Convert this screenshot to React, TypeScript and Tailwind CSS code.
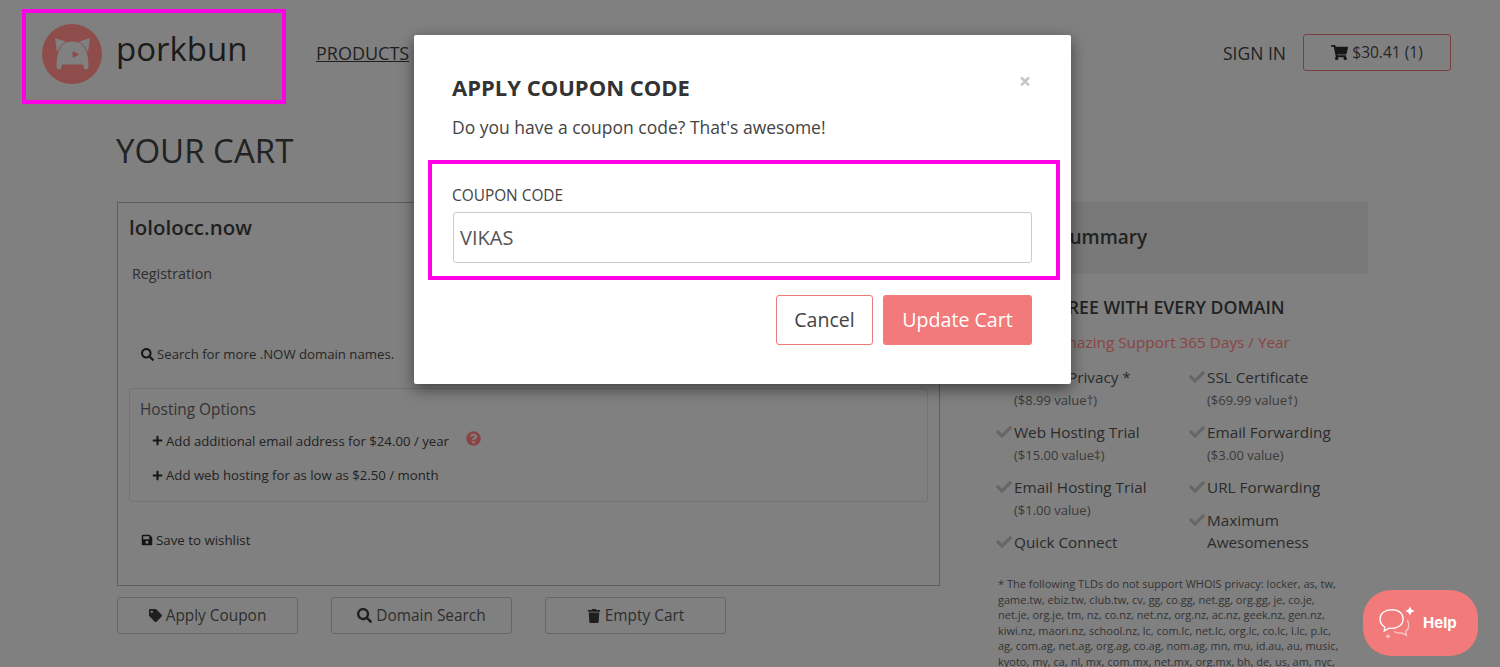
import React from "react";
import { FaCheck, FaChevronDown, FaPlus, FaQuestionCircle, FaSave, FaSearch, FaShoppingCart, FaTag, FaTrash } from "react-icons/fa";

const tldNote =
  "* The following TLDs do not support WHOIS privacy: locker, as, tw, game.tw, ebiz.tw, club.tw, cv, gg, co.gg, net.gg, org.gg, je, co.je, net.je, org.je, tm, nz, co.nz, net.nz, org.nz, ac.nz, geek.nz, gen.nz, kiwi.nz, maori.nz, school.nz, lc, com.lc, net.lc, org.lc, co.lc, l.lc, p.lc, ag, com.ag, net.ag, org.ag, co.ag, nom.ag, mn, mu, id.au, au, music, kyoto, my, ca, nl, mx, com.mx, net.mx, org.mx, bh, de, us, am, nyc,";

const PorkbunLogo = () => (
  <svg viewBox="0 0 60 60" className="w-[60px] h-[60px] shrink-0">
    <circle cx="30" cy="30" r="30" fill="#8e4c4a" />
    {/* ears sit behind the head, the stroke keeps them apart */}
    <path d="M13 14 L25 18 L15 28 Z" fill="#808080" />
    <path d="M48 14 L36 18 L46 28 Z" fill="#808080" />
    <path
      d="M14 43 C14 25 20 17 30.5 17 C41 17 47 25 47 43 C47 47 41 47 41 43 L41 41 L20 41 L20 43 C20 47 14 47 14 43 Z"
      fill="#808080"
      stroke="#8e4c4a"
      strokeWidth="1"
    />
    <path d="M31 27.5 L36.5 30.5 L31 33.5 Z" fill="#8e4c4a" stroke="#8e4c4a" strokeWidth="0.8" />
  </svg>
);

const HelpIcon = () => (
  <svg viewBox="0 0 40 36" className="w-[38px] h-[34px] shrink-0" fill="none" stroke="#ffffff" strokeWidth="1.4">
    <path d="M14.5 4 C7 4 2 8 2 13.5 C2 17.5 4 20.5 7 22 L6.5 26.5 L11.5 23.5 C19 24.5 26.5 21 26.5 13.5 C26.5 8 22 4 14.5 4 Z" />
    <path d="M31 15 C33.5 20 32.5 25 29 27 L30 31 L25 28.5 C22 29 19.5 28.5 17 27" strokeOpacity="0.6" />
    <path d="M33.7 0.5 L35.3 3.7 L38.7 5.3 L35.3 6.9 L33.7 10.1 L32.1 6.9 L28.7 5.3 L32.1 3.7 Z" fill="#ffffff" stroke="none" />
    <path d="M10.5 29 L11.3 31 L13.5 32 L11.3 33 L10.5 35 L9.7 33 L7.5 32 L9.7 31 Z" fill="#ffffff" stroke="none" fillOpacity="0.6" />
  </svg>
);

const Feature = ({ title, sub }: { title: string; sub?: string }) => (
  <div className={`flex gap-[2px] ${sub ? "h-[55px]" : "h-[33px]"}`}>
    <FaCheck className="text-[#666666] text-[16px] mt-[3px] shrink-0" />
    <div>
      <div className="text-[15.3px] leading-[22px] text-[#2b2b2b]">{title}</div>
      {sub && <div className="text-[13px] leading-[22px] text-[#3a3a3a] mt-px">{sub}</div>}
    </div>
  </div>
);

const GhostButton = ({ icon, label }: { icon: React.ReactNode; label: string }) => (
  <div className="w-[181px] h-[37px] flex items-center justify-center gap-[4px] border border-[#666666] rounded-[3px] text-[15.4px] text-[#2e2e2e]">
    {icon}
    {label}
  </div>
);

export default function App() {
  return (
    <div className="relative h-[667px] overflow-hidden bg-[#808080] text-[#222222] font-['Open_Sans',sans-serif]">
      <header className="flex items-start pl-[22px] pr-[49px] pt-[9px]">
        <div className="w-[264px] h-[95px] border-4 border-[#ff00e6] flex items-center gap-[14px] pl-[16px] pb-[5px]">
          <PorkbunLogo />
          <span className="text-[33px] leading-[44px] text-[#1b1b1b] pb-[10px]">porkbun</span>
        </div>
        <a className="ml-[30px] mt-[32px] flex items-center gap-[4px] text-[18px] leading-[24px] underline text-[#1f1f1f]">
          PRODUCTS
          <FaChevronDown className="text-[#8a4442] text-[10px]" />
        </a>
        <div className="ml-auto flex items-center gap-[17px] mt-[25px]">
          <span className="text-[17.5px] leading-[24px] text-[#1f1f1f] mt-[1px]">SIGN IN</span>
          <div className="w-[148px] h-[37px] flex items-center justify-center gap-[4px] border border-[#7c3f3f] rounded-[3px] text-[15.5px] text-[#262626]">
            <FaShoppingCart className="text-[#161616] text-[17px]" />
            $30.41 (1)
          </div>
        </div>
      </header>

      <main className="pl-[116px] pr-[132px]">
        <h1 className="text-[33px] leading-[44px] text-[#222222] mt-[25px]">YOUR CART</h1>
        <div className="flex gap-[35px] mt-[29px]">
          <div className="w-[824px] shrink-0">
            <section className="h-[384px] ml-px border border-[#5e5e5e] px-[11px] pt-[10px]">
              <h2 className="text-[20.5px] leading-[28px] font-semibold text-[#1f1f1f]">lololocc.now</h2>
              <div className="text-[14.3px] leading-[20px] text-[#2e2e2e] ml-[3px] mt-[23px]">Registration</div>
              <div className="flex items-center gap-[3px] text-[13.2px] leading-[18px] text-[#262626] ml-[12px] mt-[61px]">
                <FaSearch className="text-[#161616] text-[13px]" />
                Search for more .NOW domain names.
              </div>
              <div className="h-[114px] border border-[#737373] rounded-[3px] mt-[25px] px-[10px] pt-[10px]">
                <div className="text-[15.4px] leading-[22px] text-[#333333]">Hosting Options</div>
                <div className="flex items-center gap-[3px] text-[13.2px] leading-[18px] text-[#222222] ml-[12px] mt-[10px]">
                  <FaPlus className="text-[#161616] text-[11px]" />
                  Add additional email address for $24.00 / year
                  <FaQuestionCircle className="text-[#8a4442] text-[15px] ml-[14px] mb-[4px]" />
                </div>
                <div className="flex items-center gap-[3px] text-[13.2px] leading-[18px] text-[#222222] ml-[12px] mt-[16px]">
                  <FaPlus className="text-[#161616] text-[11px]" />
                  Add web hosting for as low as $2.50 / month
                </div>
              </div>
              <div className="flex items-center gap-[3px] text-[13.3px] leading-[18px] text-[#1f1f1f] ml-[12px] mt-[29px]">
                <FaSave className="text-[#161616] text-[12px]" />
                Save to wishlist
              </div>
            </section>
            <div className="flex gap-[33px] ml-px mt-[11px]">
              <GhostButton icon={<FaTag className="text-[#1f1f1f] text-[13px]" />} label="Apply Coupon" />
              <GhostButton icon={<FaSearch className="text-[#1f1f1f] text-[15px]" />} label="Domain Search" />
              <GhostButton icon={<FaTrash className="text-[#1f1f1f] text-[14px]" />} label="Empty Cart" />
            </div>
          </div>

          <aside className="w-[393px] shrink-0">
            <div className="h-[72px] flex items-center bg-[#797979] pl-[25px] pb-px text-[19px] font-semibold text-[#222222]">
              Order Summary
            </div>
            <h3 className="text-[17.7px] leading-[24px] font-semibold text-center text-[#222222] mt-[21px]">
              FREE WITH EVERY DOMAIN
            </h3>
            <p className="text-[15.3px] leading-[22px] text-center text-[#8a4442] mt-[12px]">Amazing Support 365 Days / Year</p>
            <div className="flex mt-[13px] pl-[21px]">
              <div className="w-[193px]">
                <Feature title="WHOIS Privacy *" sub="($8.99 value†)" />
                <Feature title="Web Hosting Trial" sub="($15.00 value‡)" />
                <Feature title="Email Hosting Trial" sub="($1.00 value)" />
                <Feature title="Quick Connect" />
              </div>
              <div className="w-[160px]">
                <Feature title="SSL Certificate" sub="($69.99 value†)" />
                <Feature title="Email Forwarding" sub="($3.00 value)" />
                <Feature title="URL Forwarding" />
                <Feature title="Maximum Awesomeness" />
              </div>
            </div>
            <p className="w-[345px] ml-[23px] mt-[12px] text-[11px] leading-[15.5px] text-[#333333]">{tldNote}</p>
          </aside>
        </div>
      </main>

      <div className="absolute left-[414px] top-[35px] w-[657px] h-[349px] bg-white rounded-[2px] shadow-[0_5px_15px_rgba(0,0,0,0.5)] pl-[38px] pr-[39px] pt-[37px]">
        <div className="flex justify-between">
          <h2 className="text-[22px] leading-[30px] font-bold text-[#333333]">APPLY COUPON CODE</h2>
          <span className="text-[21px] leading-[21px] font-bold text-[#c4c4c4] -mt-[1px] mr-[1px]">×</span>
        </div>
        <p className="text-[17.5px] leading-[24px] text-[#444444] mt-[13px]">Do you have a coupon code? That's awesome!</p>
        <div className="w-[632px] h-[120px] -ml-[24px] mt-[21px] border-4 border-[#ff00e6] pl-[21px] pr-[24px] pt-[22px]">
          <div className="text-[15.4px] leading-[20px] text-[#444444] -ml-px">COUPON CODE</div>
          <div className="w-[579px] h-[51px] mt-[6px] flex items-center border border-[#cccccc] rounded-[3px] pl-[6px] text-[20px] text-[#555555]">VIKAS</div>
        </div>
        <div className="flex justify-end gap-[10px] mt-[15px]">
          <div className="w-[97px] h-[50px] flex items-center justify-center border border-[#ef7a7a] rounded-[3px] text-[19.6px] text-[#444444]">Cancel</div>
          <div className="w-[149px] h-[50px] flex items-center justify-center bg-[#f27a7a] rounded-[3px] text-[19.6px] text-white">Update Cart</div>
        </div>
      </div>

      <div className="absolute left-[1363px] top-[590px] w-[115px] h-[66px] bg-[#f27a7a] rounded-[28px] flex items-center gap-[7px] pl-[15px] text-[15px] font-bold text-white font-['Inter',sans-serif]">
        <HelpIcon />
        Help
      </div>
    </div>
  );
}
